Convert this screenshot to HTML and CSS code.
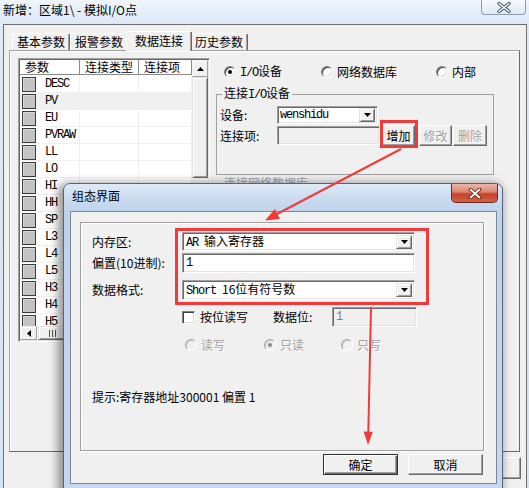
FILE: index.html
```html
<!DOCTYPE html>
<html lang="zh-CN">
<head>
<meta charset="utf-8">
<title>新增：区域1\ - 模拟I/O点</title>
<link rel="stylesheet" href="styles.css">
</head>
<body>
<div class="win">
  <div class="titlebar">
    <span class="title">新增：区域1\ - 模拟I/O点</span>
    <span class="closebtn"><svg width="14" height="11" viewBox="0 0 14 11"><path d="M2 1.5 L12 9.5 M12 1.5 L2 9.5" stroke="#47526a" stroke-width="3.4" stroke-linecap="round"/><path d="M2 1.5 L12 9.5 M12 1.5 L2 9.5" stroke="#fff" stroke-width="1.5" stroke-linecap="round"/></svg></span>
  </div>
  <div class="client">
    <div class="tabs">
      <span class="tab">基本参数</span>
      <span class="tab">报警参数</span>
      <span class="tab sel">数据连接</span>
      <span class="tab">历史参数</span>
    </div>
    <div class="panel">
      <div class="lv">
        <div class="lv-main">
          <div class="lv-head"><span>参数</span><span>连接类型</span><span>连接项</span></div>
          <div class="lv-rows">
            <div class="lv-row"><span><i class="sw"></i><b class="mono">DESC</b></span><span></span><span></span></div>
            <div class="lv-row hl"><span><i class="sw"></i><b class="mono">PV</b></span><span></span><span></span></div>
            <div class="lv-row"><span><i class="sw"></i><b class="mono">EU</b></span><span></span><span></span></div>
            <div class="lv-row"><span><i class="sw"></i><b class="mono">PVRAW</b></span><span></span><span></span></div>
            <div class="lv-row"><span><i class="sw"></i><b class="mono">LL</b></span><span></span><span></span></div>
            <div class="lv-row"><span><i class="sw"></i><b class="mono">LO</b></span><span></span><span></span></div>
            <div class="lv-row"><span><i class="sw"></i><b class="mono">HI</b></span><span></span><span></span></div>
            <div class="lv-row"><span><i class="sw"></i><b class="mono">HH</b></span><span></span><span></span></div>
            <div class="lv-row"><span><i class="sw"></i><b class="mono">SP</b></span><span></span><span></span></div>
            <div class="lv-row"><span><i class="sw"></i><b class="mono">L3</b></span><span></span><span></span></div>
            <div class="lv-row"><span><i class="sw"></i><b class="mono">L4</b></span><span></span><span></span></div>
            <div class="lv-row"><span><i class="sw"></i><b class="mono">L5</b></span><span></span><span></span></div>
            <div class="lv-row"><span><i class="sw"></i><b class="mono">H3</b></span><span></span><span></span></div>
            <div class="lv-row"><span><i class="sw"></i><b class="mono">H4</b></span><span></span><span></span></div>
            <div class="lv-row"><span><i class="sw"></i><b class="mono">H5</b></span><span></span><span></span></div>
          </div>
        </div>
        <div class="vscroll">
          <span class="sbbtn"><svg width="7" height="4" viewBox="0 0 7 4"><path d="M3.5 0 L7 4 L0 4 Z" fill="#000"/></svg></span>
          <span class="thumb-v"></span>
        </div>
        <div class="hscroll">
          <span class="sbbtn h"><svg width="4" height="7" viewBox="0 0 4 7"><path d="M0 3.5 L4 0 L4 7 Z" fill="#000"/></svg></span>
          <span class="thumb-h"><svg width="7" height="7" viewBox="0 0 7 7"><path d="M0.5 0 V7 M3.5 0 V7 M6.5 0 V7" stroke="#555" stroke-width="1"/></svg></span>
        </div>
        <div class="corner"></div>
      </div>
      <div class="rcol">
        <div class="radios">
          <span class="opt o1"><i class="radio on"></i><span><span class="mono">I/O</span>设备</span></span>
          <span class="opt o2"><i class="radio"></i><span>网络数据库</span></span>
          <span class="opt o3"><i class="radio"></i><span>内部</span></span>
        </div>
        <fieldset class="grp g1">
          <legend>连接<span class="mono">I/O</span>设备</legend>
          <div class="frow r1">
            <span class="flabel">设备:</span>
            <div class="combo cdev"><span class="mono">wenshidu</span><i class="dd"><svg width="7" height="4" viewBox="0 0 7 4"><path d="M0 0 L7 0 L3.5 4 Z" fill="#000"/></svg></i></div>
          </div>
          <div class="frow r2">
            <span class="flabel">连接项:</span>
            <div class="edit dis eitem"></div>
            <button class="btn b1">增加</button>
            <button class="btn dis b2">修改</button>
            <button class="btn dis b3">删除</button>
          </div>
        </fieldset>
        <fieldset class="grp g2"><legend>连接网络数据库</legend></fieldset>
      </div>
    </div>
    <div class="mainbtns"><button class="btn mb">确定</button><button class="btn mb">取消</button></div>
  </div>
</div>

<div class="dlg">
  <div class="dlg-title">
    <span class="dlg-caption">组态界面</span>
    <span class="dlg-close"><svg width="14" height="11" viewBox="0 0 14 11"><path d="M2.5 1.5 L11.5 9.5 M11.5 1.5 L2.5 9.5" stroke="#5a1e14" stroke-width="3.6" stroke-linecap="round"/><path d="M2.5 1.5 L11.5 9.5 M11.5 1.5 L2.5 9.5" stroke="#fff" stroke-width="1.8" stroke-linecap="round"/></svg></span>
  </div>
  <div class="dlg-client">
    <div class="dgrp">
      <div class="drow d1">
        <span class="dlabel">内存区:</span>
        <div class="combo wide"><span><span class="mono code">AR</span>输入寄存器</span><i class="dd"><svg width="7" height="4" viewBox="0 0 7 4"><path d="M0 0 L7 0 L3.5 4 Z" fill="#000"/></svg></i></div>
      </div>
      <div class="drow d2">
        <span class="dlabel">偏置(10进制):</span>
        <div class="edit wide"><span class="mono">1</span></div>
      </div>
      <div class="drow d3">
        <span class="dlabel">数据格式:</span>
        <div class="combo wide"><span><span class="mono code">Short</span>16位有符号数</span><i class="dd"><svg width="7" height="4" viewBox="0 0 7 4"><path d="M0 0 L7 0 L3.5 4 Z" fill="#000"/></svg></i></div>
      </div>
      <div class="drow d4">
        <span class="dlabel"></span>
        <i class="chk"></i>
        <span class="chktext">按位读写</span>
        <span class="bitlabel">数据位:</span>
        <div class="edit dis ebit"><span class="mono">1</span></div>
      </div>
      <div class="drow d5">
        <span class="dlabel"></span>
        <span class="ropt ro1"><i class="radio dis"></i><span class="distext">读写</span></span>
        <span class="ropt ro2"><i class="radio dis on"></i><span class="distext">只读</span></span>
        <span class="ropt ro3"><i class="radio dis"></i><span class="distext">只写</span></span>
      </div>
      <div class="hint">提示:寄存器地址300001 偏置 1</div>
    </div>
    <div class="dbtns">
      <button class="btn def">确定</button>
      <button class="btn">取消</button>
    </div>
  </div>
</div>

<div class="mark mark-add"></div>
<div class="mark mark-form"></div>

<svg class="arrows" width="529" height="488" viewBox="0 0 529 488">
  <line x1="401" y1="149" x2="277" y2="214" stroke="#f23a3a" stroke-width="2"/>
  <polygon points="265,220.5 274.9,209.1 280,218.9" fill="#f23a3a"/>
  <line x1="371" y1="307" x2="368.3" y2="433" stroke="#f23a3a" stroke-width="2"/>
  <polygon points="368,445 363.6,431.5 372.8,431.7" fill="#f23a3a"/>
</svg>
</body>
</html>
```

FILE: styles.css
```css
* { box-sizing: border-box; }
html, body { margin: 0; padding: 0; }
body {
  width: 529px; height: 488px; overflow: hidden; position: relative;
  background: #d7e5f4;
  font-family: "Noto Sans CJK SC", "Noto Sans", sans-serif;
  font-size: 12px; line-height: 14px; color: #000;
}
i, b { font-style: normal; font-weight: normal; display: block; }
.mono {
  font-family: "Liberation Mono", "DejaVu Sans Mono", monospace;
  font-size: 12px; letter-spacing: -1.2px; display: inline;
}
.code { margin-right: 6px; }

/* main window */
.win {
  width: 529px; height: 488px; display: flex; flex-direction: column;
  background: linear-gradient(#eef5fc 0, #dde9f6 24px, #d4e3f3 100%);
}
.titlebar {
  height: 24px; flex: none; display: flex; justify-content: space-between;
  align-items: flex-start; padding: 0 3px 0 3px;
}
.title { line-height: 20px; }
.closebtn {
  width: 45px; height: 15px; border: 1px solid #8e9cb0; border-top: none;
  border-radius: 0 0 4px 4px; background: linear-gradient(#f6f9fc, #dfe8f2);
  display: flex; align-items: center; justify-content: center;
}
.client {
  flex: 1; min-height: 0; margin: 0 2px 0 3px; border: 1px solid #6e6e6e; border-bottom: none;
  background: #f0f0f0; display: flex; flex-direction: column;
}
.tabs {
  height: 25px; flex: none; display: flex; align-items: flex-end; padding-left: 8px;
  position: relative; z-index: 1;
}
.tab {
  height: 17px; width: 58px; flex: none; text-align: center; line-height: 16px;
  border-top: 1px solid #fff; border-left: 1px solid #fff; border-right: 1px solid #696969;
  box-shadow: inset -1px 0 #a0a0a0; border-radius: 2px 2px 0 0; background: #f0f0f0;
}
.tab.sel {
  height: 20px; width: 66px; margin: 0 -2px -1px; line-height: 17px;
  position: relative; z-index: 2;
}
.panel {
  flex: none; width: 511px; height: 402px; margin-left: 5px;
  border: 1px solid; border-color: #a0a0a0 #696969 #696969 #a0a0a0;
  box-shadow: inset 1px 1px #fff;
  display: flex; align-items: flex-start; padding: 7px 0 0 8px;
}

/* list view */
.lv {
  width: 192px; height: 284px; flex: none;
  border: 1px solid; border-color: #a0a0a0 #fff #fff #a0a0a0;
  box-shadow: inset 1px 1px #696969, inset -1px -1px #e3e3e3;
  padding: 1px; background: #fff;
  display: grid; grid-template-columns: 172px 16px; grid-template-rows: 266px 14px;
}
.lv-main { min-width: 0; }
.lv-head { display: grid; grid-template-columns: 60px 59px 53px; height: 15px; }
.lv-head span {
  border-right: 1px solid #8a8a8a; border-bottom: 1px solid #8a8a8a;
  background: #fff; padding-left: 5px; line-height: 14px; white-space: nowrap;
}
.lv-rows { height: 251px; overflow: hidden; padding-top: 1px; }
.lv-row { display: grid; grid-template-columns: 60px 59px 53px; height: 17px; }
.lv-row > span { border-right: 1px solid #f0f0f0; border-bottom: 1px solid #f0f0f0; }
.lv-row > span:first-child { display: flex; align-items: center; padding-left: 2px; }
.lv-row.hl { background: #f0f0f0; }
.sw {
  width: 14px; height: 15px; flex: none; border: 1px solid #3a3a3a; background: #c3c3c3;
  margin-right: 9px; box-shadow: inset 1px 1px #d8d8d8;
}
.vscroll { background: #f6f6f6; display: flex; flex-direction: column; }
.sbbtn {
  width: 16px; height: 17px; flex: none; background: #f0f0f0;
  border: 1px solid; border-color: #f0f0f0 #a0a0a0 #a0a0a0 #f0f0f0;
  box-shadow: inset 1px 1px #fff;
  display: flex; align-items: center; justify-content: center;
}
.sbbtn.h { width: 17px; height: 14px; }
.thumb-v {
  width: 16px; height: 101px; flex: none; background: #f0f0f0;
  border: 1px solid; border-color: #e3e3e3 #696969 #696969 #e3e3e3;
  box-shadow: inset 1px 1px #fff, inset -1px -1px #a0a0a0;
}
.hscroll { background: #f6f6f6; display: flex; }
.thumb-h {
  width: 28px; height: 14px; flex: none; margin-left: 1px; background: #f0f0f0;
  border: 1px solid; border-color: #e3e3e3 #696969 #696969 #e3e3e3;
  box-shadow: inset 1px 1px #fff, inset -1px -1px #a0a0a0;
  display: flex; align-items: center; justify-content: center;
}
.corner { background: #f0f0f0; }

/* right column */
.rcol { margin-left: 6px; width: 278px; display: flex; flex-direction: column; }
.radios { display: flex; height: 14px; margin-top: 7px; padding-left: 8px; }
.opt { display: flex; align-items: center; flex: none; white-space: nowrap; }
.o1 { width: 97px; }
.o2 { width: 115px; }
.radio {
  width: 12px; height: 12px; flex: none; border-radius: 50%; background: #fff;
  border: 1px solid; border-color: #808080 #fff #fff #808080;
  box-shadow: inset 1px 1px #404040, inset -1px -1px #d8d8d8;
  position: relative; margin-right: 4px;
}
.radio.on::after {
  content: ""; position: absolute; left: 3px; top: 3px; width: 4px; height: 4px;
  border-radius: 50%; background: #000;
}
.radio.dis { background: #f0f0f0; border-color: #a8a8a8 #fff #fff #a8a8a8; box-shadow: inset 1px 1px #c8c8c8; }
.radio.dis.on::after { background: #8a8a8a; }

.grp { margin: 7px 0 0 0; padding: 0 3px 28px 3px; border: 1px solid #a0a0a0; min-width: 0; }
.grp legend { margin-left: 2px; padding: 0 2px; line-height: 14px; white-space: nowrap; }
.g2 { margin-top: 1px; padding-bottom: 40px; color: #9aa4ae; }
.frow { display: flex; align-items: center; }
.r1 { margin-top: 4px; }
.r2 { margin-top: 1px; }
.flabel { width: 57px; flex: none; }

.combo, .edit {
  border: 1px solid; border-color: #a0a0a0 #fff #fff #a0a0a0;
  box-shadow: inset 1px 1px #696969, inset -1px -1px #e3e3e3;
  background: #fff; display: flex; align-items: center; justify-content: space-between;
  padding: 0 2px 0 3px; white-space: nowrap; flex: none;
}
.cdev { width: 101px; height: 18px; padding-left: 2px; }
.dd {
  width: 16px; height: 14px; flex: none; background: #f0f0f0;
  border: 1px solid; border-color: #e3e3e3 #696969 #696969 #e3e3e3;
  box-shadow: inset 1px 1px #fff, inset -1px -1px #a0a0a0;
  display: flex; align-items: center; justify-content: center;
}
.edit.dis { background: #f0f0f0; color: #808080; }
.eitem { width: 103px; height: 19px; }

.btn {
  font: inherit; color: #000; padding: 0; background: #f0f0f0;
  border: 1px solid; border-color: #fff #696969 #696969 #fff;
  box-shadow: inset -1px -1px #a0a0a0; flex: none; line-height: 14px;
}
.btn.dis { color: #a0a0a0; text-shadow: 1px 1px #fff; }
.b1 { width: 33px; height: 21px; margin-left: 2px; }
.b2 { width: 33px; height: 21px; margin-left: 4px; }
.b3 { width: 34px; height: 21px; margin-left: 1px; }
.mainbtns { display: flex; justify-content: flex-end; gap: 8px; margin-top: 5px; padding-right: 5px; }
.mb { width: 75px; height: 22px; }

/* dialog */
.dlg {
  position: absolute; left: 63px; top: 183px; width: 440px; height: 308px;
  border: 1px solid #52657e; border-radius: 7px 7px 0 0;
  background: linear-gradient(180deg, #dde9f7 0, #cbdcf0 14px, #bed3ec 28px, #c3d7ee 100%);
  box-shadow: -3px 2px 10px 2px rgba(0, 0, 0, .42);
  padding: 0 5px 6px 6px; display: flex; flex-direction: column;
}
.dlg-title { height: 27px; flex: none; display: flex; justify-content: space-between; align-items: flex-start; }
.dlg-caption { padding-left: 2px; line-height: 24px; }
.dlg-close {
  width: 47px; height: 19px; margin-right: -1px;
  border: 1px solid #6b2a20; border-top: none; border-radius: 0 0 5px 5px;
  background: linear-gradient(#ecb6a9 0, #dc8473 45%, #c5432c 55%, #d4613f 100%);
  display: flex; align-items: center; justify-content: center;
}
.dlg-client {
  height: 273px; flex: none; background: #f0f0f0; border: 1px solid #7b8797;
  padding: 10px 0 0 9px; display: flex; flex-direction: column;
}
.dgrp {
  width: 404px; height: 229px; flex: none; border: 1px solid #a0a0a0;
  box-shadow: inset 1px 1px #fff, 1px 1px 0 #fff; padding: 9px 0 0 11px;
}
.drow { display: flex; align-items: center; white-space: nowrap; }
.dlabel { width: 90px; flex: none; }
.wide { width: 233px; }
.d1 .combo { height: 19px; }
.d2 { margin-top: 2px; }
.d2 .edit { height: 20px; justify-content: flex-start; }
.d3 { margin-top: 7px; }
.d3 .combo { height: 20px; }
.d4 { margin-top: 7px; height: 20px; }
.chk {
  width: 13px; height: 13px; flex: none; background: #fff;
  border: 1px solid; border-color: #808080 #fff #fff #808080;
  box-shadow: inset 1px 1px #404040, inset -1px -1px #d8d8d8;
}
.chktext { margin-left: 5px; width: 73px; flex: none; }
.bitlabel { width: 59px; flex: none; }
.ebit { width: 85px; height: 20px; justify-content: flex-start; }
.d5 { margin-top: 11px; height: 14px; }
.ropt { display: flex; align-items: center; flex: none; }
.ro1 { margin-left: 3px; width: 79px; }
.ro2 { width: 77px; }
.distext { color: #a0a0a0; text-shadow: 1px 1px #fff; }
.hint { margin-top: 38px; line-height: 14px; }
.dbtns { display: flex; justify-content: flex-end; gap: 10px; margin-top: 3px; padding-right: 13px; }
.dbtns .btn { width: 75px; height: 21px; }
.btn.def {
  border: 1px solid #303030;
  box-shadow: inset 1px 1px #fff, inset -1px -1px #696969, inset -2px -2px #a0a0a0;
}

/* annotations */
.mark { position: absolute; border: 3px solid #f23a3a; pointer-events: none; }
.mark-add { left: 380px; top: 120px; width: 38px; height: 28px; }
.mark-form { left: 175px; top: 228px; width: 254px; height: 77px; }
.arrows { position: absolute; left: 0; top: 0; pointer-events: none; }
```
